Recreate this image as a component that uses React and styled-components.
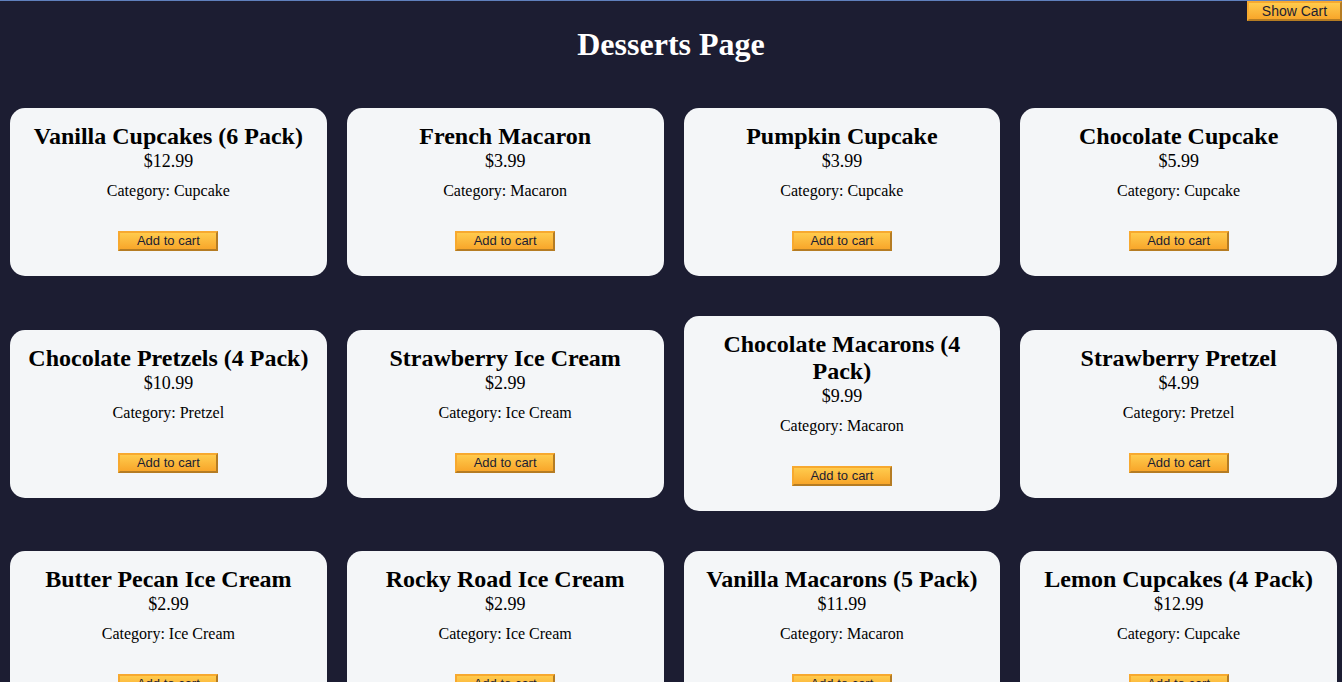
import React from 'react'
import styled, { createGlobalStyle } from 'styled-components'

const desserts = [
  { name: 'Vanilla Cupcakes (6 Pack)', price: 12.99, category: 'Cupcake' },
  { name: 'French Macaron', price: 3.99, category: 'Macaron' },
  { name: 'Pumpkin Cupcake', price: 3.99, category: 'Cupcake' },
  { name: 'Chocolate Cupcake', price: 5.99, category: 'Cupcake' },
  { name: 'Chocolate Pretzels (4 Pack)', price: 10.99, category: 'Pretzel' },
  { name: 'Strawberry Ice Cream', price: 2.99, category: 'Ice Cream' },
  { name: 'Chocolate Macarons (4 Pack)', price: 9.99, category: 'Macaron' },
  { name: 'Strawberry Pretzel', price: 4.99, category: 'Pretzel' },
  { name: 'Butter Pecan Ice Cream', price: 2.99, category: 'Ice Cream' },
  { name: 'Rocky Road Ice Cream', price: 2.99, category: 'Ice Cream' },
  { name: 'Vanilla Macarons (5 Pack)', price: 11.99, category: 'Macaron' },
  { name: 'Lemon Cupcakes (4 Pack)', price: 12.99, category: 'Cupcake' },
]

const GlobalStyle = createGlobalStyle`
  html, body {
    margin: 0;
    background-color: #1c1d32;
  }
  body {
    border-top: 1px solid #5f80bd;
    font-family: 'Liberation Serif', 'Times New Roman', serif;
  }
`

const App = () => {
  return (
    <>
      <GlobalStyle />
      <Page>
        <TopBar>
          <OrangeButton $size="14px" $width="95px">Show Cart</OrangeButton>
        </TopBar>
        <Title>Desserts Page</Title>
        <Grid>
          {desserts.map((d) => (
            <Card key={d.name}>
              <Name>{d.name}</Name>
              <Price>${d.price.toFixed(2)}</Price>
              <Category>Category: {d.category}</Category>
              <OrangeButton $size="13px" $width="100px">Add to cart</OrangeButton>
            </Card>
          ))}
        </Grid>
      </Page>
    </>
  )
}

const Page = styled.div`
  position: relative;
  min-height: 681px;
`

const TopBar = styled.div`
  position: absolute;
  top: 0;
  right: 0;
`

const Title = styled.h1`
  margin: 0;
  padding-top: 25px;
  text-align: center;
  color: #ffffff;
  font-size: 32px;
  line-height: 37px;
  font-weight: 700;
`

const Grid = styled.div`
  display: grid;
  grid-template-columns: repeat(4, 1fr);
  column-gap: 20px;
  row-gap: 40px;
  align-items: center;
  padding: 20px 5px 20px 10px;
  margin-top: 25px;
`

const Card = styled.div`
  background-color: #f4f6f8;
  border-radius: 15px;
  padding: 15px 10px 25px;
  display: flex;
  flex-direction: column;
  align-items: center;
  text-align: center;
  color: #000;
`

const Name = styled.h2`
  margin: 0;
  font-size: 24px;
  line-height: 27px;
  font-weight: 700;
`

const Price = styled.div`
  margin-top: 1px;
  font-size: 18px;
  line-height: 21px;
`

const Category = styled.p`
  margin: 10px 0 31px;
  font-size: 16px;
  line-height: 18px;
`

const OrangeButton = styled.button`
  width: ${(p) => p.$width};
  height: 20px;
  padding: 0;
  font-family: 'Liberation Sans', Arial, sans-serif;
  font-size: ${(p) => p.$size};
  color: #1c1d32;
  background: linear-gradient(#ffcb4d, #f8a62a);
  border: 2px solid;
  border-color: #f7a92f #b57c23 #b57c23 #f7a92f;
  cursor: pointer;
  line-height: 14px;
`

export default App
